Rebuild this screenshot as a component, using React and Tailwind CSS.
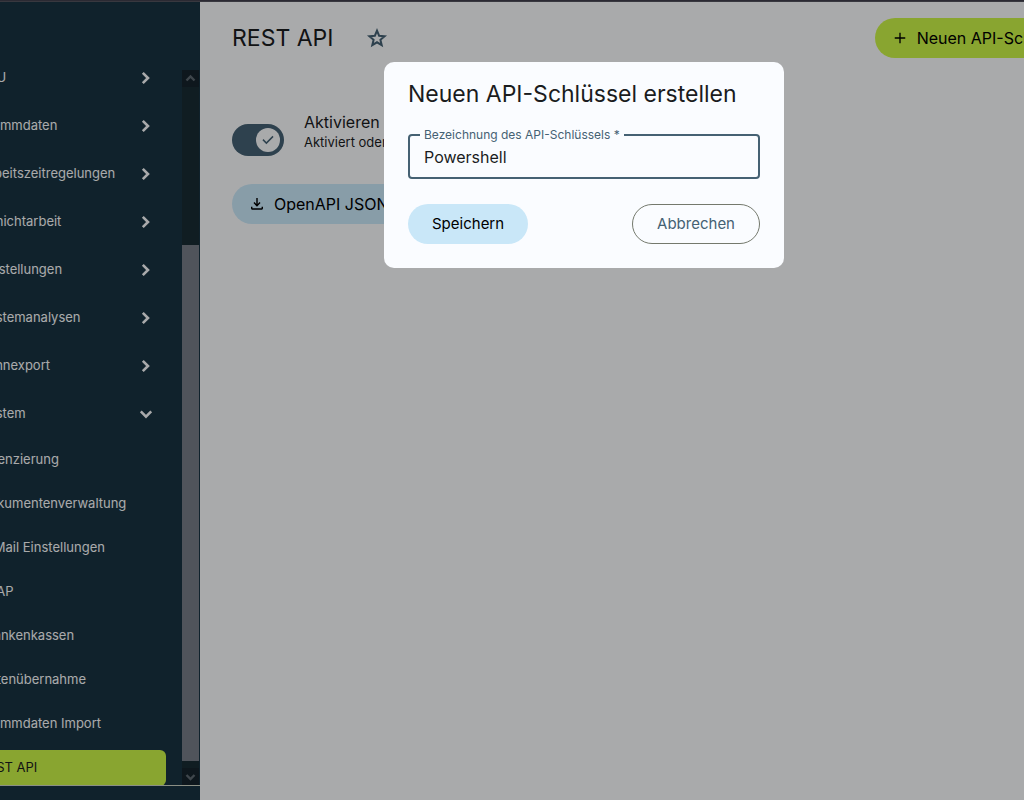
import React, { useState } from 'react';

const menu = [
  { label: 'EAU' },
  { label: 'Stammdaten' },
  { label: 'Arbeitszeitregelungen' },
  { label: 'Schichtarbeit' },
  { label: 'Einstellungen' },
  { label: 'Systemanalysen' },
  { label: 'Lohnexport' },
  {
    label: 'System',
    open: true,
    children: [
      'Lizenzierung',
      'Dokumentenverwaltung',
      'E-Mail Einstellungen',
      'LDAP',
      'Krankenkassen',
      'Datenübernahme',
      'Stammdaten Import',
      'REST API',
    ],
  },
];

function Chevron({ open }) {
  return (
    <svg viewBox="0 0 24 24" className="w-6 h-6 shrink-0 fill-none stroke-current stroke-[2.6]" aria-hidden="true">
      {open ? <path d="M6.800 9.400L12 14.600l5.200-5.200" /> : <path d="M8.800 6.800L14 12l-5.200 5.200" />}
    </svg>
  );
}

function ScrollArrow({ down }) {
  return (
    <svg viewBox="0 0 17 17" className="w-[17px] h-[17px] fill-none stroke-[#5d6870] stroke-[2.4]" aria-hidden="true">
      {down ? <path d="M4.500 7l4 4 4-4" /> : <path d="M4.500 10.500l4-4 4 4" />}
    </svg>
  );
}

function Sidebar() {
  return (
    <aside className="w-[200px] shrink-0 flex flex-col bg-[#183341] text-[#fafbfd]">
      <div className="flex-1 min-h-0 flex pr-px border-b border-[#cdd3c4]">
        {/* Menu, scrolled a little to the right */}
        <nav className="flex-1 min-w-0 overflow-hidden pt-[52px]">
          <ul className="-ml-5 pr-4">
            {menu.map((item) => (
              <li key={item.label}>
                <button type="button" aria-expanded={!!item.open} className="w-full h-12 pr-2 flex items-center justify-between text-[13px]">
                  {item.label}
                  <Chevron open={item.open} />
                </button>
                {item.children && (
                  <ul>
                    {item.children.map((child) => (
                      <li key={child} className="h-11 flex items-center">
                        <a
                          href="#"
                          className={
                            child === 'REST API'
                              ? 'w-full h-9 flex items-center rounded-md bg-[#cbf347] text-[#1a1c1e] text-[13px]'
                              : 'w-full h-9 flex items-center text-[13px]'
                          }
                        >
                          {child}
                        </a>
                      </li>
                    ))}
                  </ul>
                )}
              </li>
            ))}
          </ul>
        </nav>
        {/* Scrollbar */}
        <div className="w-[17px] shrink-0 mt-[68px] flex flex-col bg-[#182b33]">
          <div className="h-[17px] flex items-center justify-center bg-[#15232b]"><ScrollArrow /></div>
          <div className="grow-[158]" />
          <div className="grow-[516] bg-[#767d86]" />
          <div className="grow-[7]" />
          <div className="h-[17px] flex items-center justify-center bg-[#15232b]"><ScrollArrow down /></div>
        </div>
      </div>
      <div className="h-3.5" />
    </aside>
  );
}

function Content() {
  return (
    <main className="flex-1 min-w-0 overflow-hidden px-8 pt-4 text-[#1a1c1e]">
      <div className="flex items-center justify-between whitespace-nowrap">
        <div className="flex items-center gap-8">
          <h1 className="text-[23px]">REST API</h1>
          <button type="button" aria-label="Favorit" className="text-[#456173]">
            <svg viewBox="0 0 24 24" className="w-6 h-6 fill-none stroke-current stroke-2">
              <path d="M12 4.600L14.100 9.700 19.600 10.200 15.400 13.800 16.700 19.200 12 16.300 7.300 19.200 8.600 13.800 4.400 10.200 9.900 9.700Z" />
            </svg>
          </button>
        </div>
        <button type="button" className="-mr-[108px] h-10 shrink-0 pl-4 pr-6 flex items-center gap-2 rounded-full bg-[#cbf347] text-black">
          <svg viewBox="0 0 24 24" className="w-[18px] h-[18px] fill-current" aria-hidden="true">
            <path d="M19 12.900h-6.100v6.100h-1.800v-6.100H5v-1.800h6.100V5h1.800v6.100H19z" />
          </svg>
          Neuen API-Schlüssel
        </button>
      </div>

      <div className="mt-[52px] flex items-start gap-5">
        <label htmlFor="rest-api" className="relative w-[52px] h-8 shrink-0 mt-3.5 rounded-full bg-[#456173]">
          <input id="rest-api" type="checkbox" role="switch" defaultChecked className="sr-only" aria-label="Aktivieren" />
          <span className="absolute right-1 top-1 w-6 h-6 rounded-full bg-[#fafbfd] flex items-center justify-center">
            <svg viewBox="0 0 24 24" className="w-4 h-4 fill-[#456173]" aria-hidden="true">
              <path d="M9.550 18.200L3.650 12.300 5.270 10.680 9.550 14.960 18.730 5.770 20.350 7.400Z" />
            </svg>
          </span>
        </label>
        <div>
          <p className="leading-6">Aktivieren</p>
          <p className="text-[13px] leading-4">Aktiviert oder</p>
        </div>
      </div>

      <button type="button" className="mt-7 h-10 pl-4 pr-6 flex items-center gap-2 rounded-full bg-[#c9e7f8] text-black">
        <svg viewBox="0 0 24 24" className="w-[18px] h-[18px] fill-current" aria-hidden="true">
          <path d="M12 15.500l-4.700-4.700 1.350-1.350 2.400 2.400V4h1.900v7.850l2.400-2.400 1.350 1.350-4.700 4.700zM6 19.500c-1.100 0-2-.900-2-2v-2h1.900v2.100h12.200v-2.100H20v2c0 1.100-.900 2-2 2H6z" />
        </svg>
        OpenAPI JSON
      </button>
    </main>
  );
}

function CreateKeyDialog() {
  const [name, setName] = useState('Powershell');

  return (
    <div className="fixed inset-0 bg-black/32 pt-[62px] pl-96">
      <form role="dialog" aria-labelledby="dialog-title" className="w-[400px] rounded-[10px] bg-[#fafcff] px-6 pt-4 pb-6 text-[#1a1c1e]">
        <h2 id="dialog-title" className="text-[23px] leading-8">Neuen API-Schlüssel erstellen</h2>
        <fieldset className="mt-[17px] h-[52px] px-3.5 border-2 border-[#456173] rounded-sm">
          <legend className="-ml-1 px-1 text-[12px] leading-4 text-[#456173]">
            <label htmlFor="key-name">Bezeichnung des API-Schlüssels *</label>
          </legend>
          <input
            id="key-name"
            type="text"
            value={name}
            onChange={(e) => setName(e.target.value)}
            className="block w-full h-7 bg-transparent outline-none"
          />
        </fieldset>
        <div className="mt-[25px] flex justify-between text-[15px]">
          <button type="button" className="h-10 px-6 rounded-full bg-[#c9e7f8] text-black">Speichern</button>
          <button type="button" className="h-10 px-6 rounded-full border border-[#74796d] text-[#456173]">Abbrechen</button>
        </div>
      </form>
    </div>
  );
}

export default function App() {
  return (
    <div className="h-screen flex flex-col overflow-hidden font-['Inter',sans-serif] text-[16px]">
      <div className="relative z-10 h-0.5 shrink-0 bg-[#2b2a33] border-b border-[#38383f]" />
      <div className="flex-1 min-h-0 flex bg-[#fafbfd]">
        <Sidebar />
        <Content />
      </div>
      <CreateKeyDialog />
    </div>
  );
}
